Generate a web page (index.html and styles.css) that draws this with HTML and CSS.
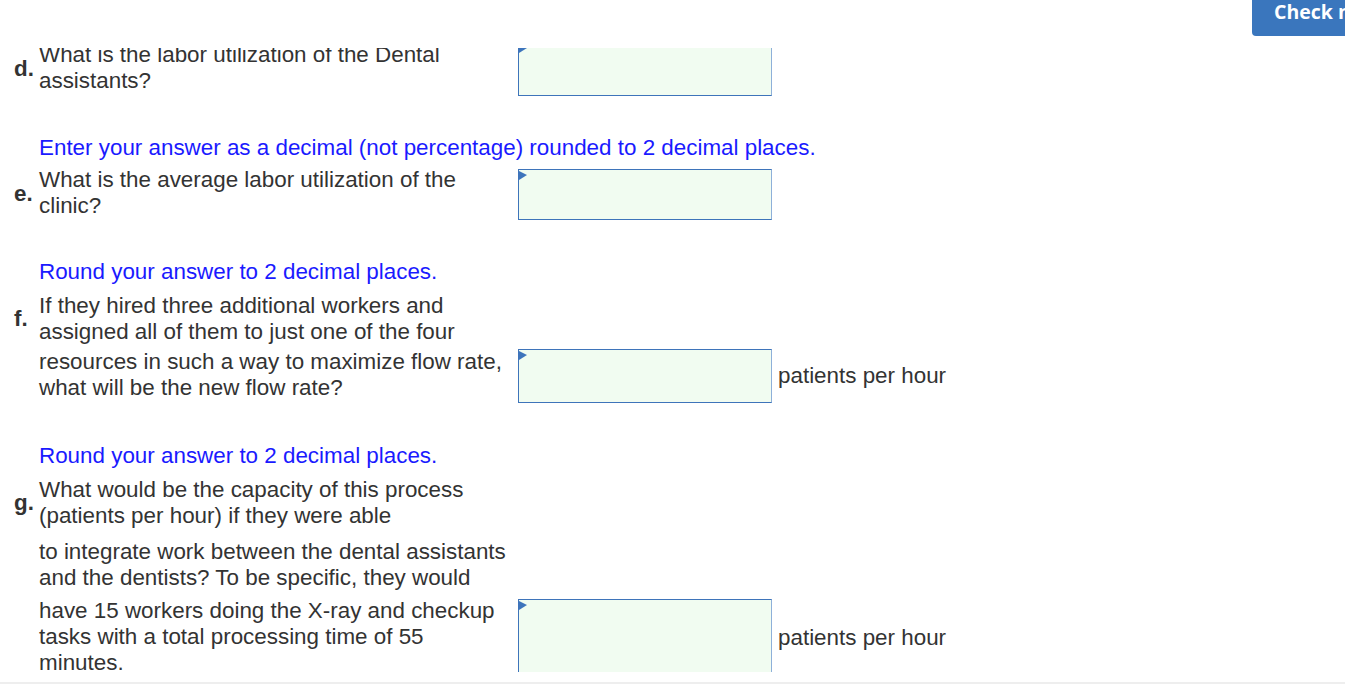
FILE: index.html
```html
<!DOCTYPE html>
<html lang="en">
<head>
<meta charset="utf-8">
<title>Questions</title>
<link rel="stylesheet" href="styles.css">
</head>
<body>
<header class="topbar">
  <button class="check-btn" type="button">Check my work</button>
</header>
<main class="scroller">
  <div class="content">
    <section class="q q-d">
      <div class="row">
        <span class="letter">d.</span>
        <div class="qtext">What is the labor utilization of the Dental<br>assistants?</div>
        <div class="answer h54"><span class="flag"></span></div>
      </div>
    </section>

    <p class="hint hint-first">Enter your answer as a decimal (not percentage) rounded to 2 decimal places.</p>

    <section class="q q-e">
      <div class="row">
        <span class="letter">e.</span>
        <div class="qtext">What is the average labor utilization of the<br>clinic?</div>
        <div class="answer h51 drop2"><span class="flag"></span></div>
      </div>
    </section>

    <p class="hint hint-second">Round your answer to 2 decimal places.</p>

    <section class="q q-f">
      <div class="row">
        <span class="letter">f.</span>
        <div class="qtext">If they hired three additional workers and<br>assigned all of them to just one of the four</div>
      </div>
      <div class="row gap4">
        <span class="letter"></span>
        <div class="qtext">resources in such a way to maximize flow rate,<br>what will be the new flow rate?</div>
        <div class="answer h54"><span class="flag"></span></div>
        <span class="unit">patients per hour</span>
      </div>
    </section>

    <p class="hint hint-third">Round your answer to 2 decimal places.</p>

    <section class="q q-g">
      <div class="row">
        <span class="letter">g.</span>
        <div class="qtext">What would be the capacity of this process<br>(patients per hour) if they were able</div>
      </div>
      <div class="row gap10">
        <span class="letter"></span>
        <div class="qtext">to integrate work between the dental assistants<br>and the dentists? To be specific, they would</div>
      </div>
      <div class="row gap7">
        <span class="letter"></span>
        <div class="qtext">have 15 workers doing the X-ray and checkup<br>tasks with a total processing time of 55<br>minutes.</div>
        <div class="answer h78 drop1"><span class="flag"></span></div>
        <span class="unit">patients per hour</span>
      </div>
    </section>
  </div>
</main>
<footer class="bottombar"></footer>
</body>
</html>
```

FILE: styles.css
```css
html, body {
  margin: 0;
  padding: 0;
  background: #ffffff;
}

body {
  width: 1345px;
  height: 684px;
  overflow: hidden;
  font-family: "Liberation Sans", Arial, sans-serif;
  font-size: 22.4px;
  color: #333333;
}

.topbar {
  height: 48px;
  display: flex;
  padding-left: 1252px;
  overflow: hidden;
  box-sizing: border-box;
}

.check-btn {
  flex-shrink: 0;
  width: 170px;
  height: 36px;
  margin: 0;
  border: none;
  border-radius: 0 0 0 4px;
  background: #3a76bd;
  color: #ffffff;
  font-family: "Open Sans", "Liberation Sans", sans-serif;
  font-weight: 700;
  font-size: 19.5px;
  line-height: 24px;
  text-align: left;
  padding: 0 0 12px 22px;
  white-space: nowrap;
}

.scroller {
  height: 624px;
  overflow: hidden;
}

.content {
  margin-top: -6px;
}

.q {
  display: flex;
  flex-direction: column;
}

.q-d { margin-top: 0; }
.q-e { margin-top: 6px; }
.q-f { margin-top: 8px; }
.q-g { margin-top: 8px; }

.row {
  display: grid;
  grid-template-columns: 39px 479px 254px auto;
  align-items: start;
}

.gap4 { margin-top: 4px; }
.gap7 { margin-top: 7px; }
.gap10 { margin-top: 10px; }

.letter {
  align-self: center;
  padding-left: 14px;
  font-weight: 700;
  font-size: 22.4px;
  line-height: 22px;
  color: #333333;
}

.qtext {
  line-height: 26px;
  white-space: nowrap;
}

.answer {
  position: relative;
  box-sizing: border-box;
  background: #f1fcf1;
  border: 1px solid #3e74ba;
  border-right-color: #8eb0d9;
}

.h51 { height: 51px; }
.h54 { height: 54px; }
.h78 { height: 78px; }
.drop1 { margin-top: 1px; }
.drop2 { margin-top: 2px; }

.flag {
  position: absolute;
  left: 0;
  top: 1px;
  width: 0;
  height: 0;
  border-left: 8px solid #3d74bc;
  border-top: 4px solid transparent;
  border-bottom: 5px solid transparent;
}

.unit {
  align-self: center;
  margin-left: 6px;
  line-height: 26px;
  white-space: nowrap;
}

.hint {
  margin: 0;
  padding-left: 39px;
  line-height: 26px;
  color: #1a1aff;
}

.hint-first { margin-top: 39px; }
.hint-second { margin-top: 39px; }
.hint-third { margin-top: 40px; }

.bottombar {
  margin-top: 10px;
  height: 2px;
  background: #eeeeee;
}
```
